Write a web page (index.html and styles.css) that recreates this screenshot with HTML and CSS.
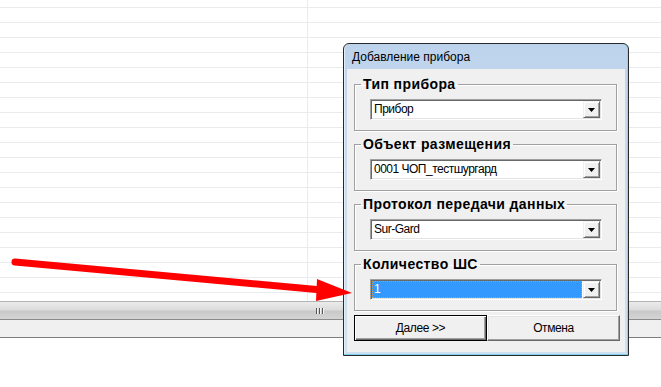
FILE: index.html
```html
<!DOCTYPE html>
<html lang="ru">
<head>
  <meta charset="UTF-8">
  <meta name="viewport" content="width=device-width, initial-scale=1.0">
  <title>Добавление прибора</title>
  <link rel="stylesheet" href="styles.css">
</head>
<body>
  <div class="sheet"></div>
  <div class="hscroll"><span class="grip"><i></i><i></i><i></i></span></div>
  <div class="status"></div>

  <div class="dialog">
    <div class="caption">Добавление прибора</div>
    <div class="client">
      <fieldset class="group">
        <legend>Тип прибора</legend>
        <div class="combo">
          <span class="value">Прибор</span>
          <span class="drop"><svg width="7" height="4" viewBox="0 0 7 4"><polygon points="0,0 7,0 3.5,4" fill="#000"/></svg></span>
        </div>
      </fieldset>
      <fieldset class="group">
        <legend>Объект размещения</legend>
        <div class="combo">
          <span class="value">0001 ЧОП_тестшургард</span>
          <span class="drop"><svg width="7" height="4" viewBox="0 0 7 4"><polygon points="0,0 7,0 3.5,4" fill="#000"/></svg></span>
        </div>
      </fieldset>
      <fieldset class="group">
        <legend>Протокол передачи данных</legend>
        <div class="combo">
          <span class="value">Sur-Gard</span>
          <span class="drop"><svg width="7" height="4" viewBox="0 0 7 4"><polygon points="0,0 7,0 3.5,4" fill="#000"/></svg></span>
        </div>
      </fieldset>
      <fieldset class="group">
        <legend>Количество ШС</legend>
        <div class="combo">
          <span class="value selected">1</span>
          <span class="drop"><svg width="7" height="4" viewBox="0 0 7 4"><polygon points="0,0 7,0 3.5,4" fill="#000"/></svg></span>
        </div>
      </fieldset>
      <div class="buttons">
        <button class="btn default">Далее &gt;&gt;</button>
        <button class="btn">Отмена</button>
      </div>
    </div>
  </div>

  <svg class="arrow" width="661" height="387" viewBox="0 0 661 387">
    <line x1="15" y1="262" x2="322" y2="290" stroke="#ff0000" stroke-width="7" stroke-linecap="round"/>
    <polygon points="317,279 352,293 316,301" fill="#ff0000"/>
  </svg>
</body>
</html>
```

FILE: styles.css
```css
body {
  margin: 0;
  width: 661px;
  height: 387px;
  overflow: hidden;
  position: relative;
  background: #fff;
  font-family: "Liberation Sans", Arial, sans-serif;
}
.sheet {
  height: 301px;
  background-color: #fff;
  background-image:
    linear-gradient(to right, transparent 307px, #e9ecef 307px, #e9ecef 308px, transparent 308px),
    repeating-linear-gradient(to bottom, transparent 0, transparent 7px, #e9ecef 7px, #e9ecef 8px, transparent 8px, transparent 15px);
}
.hscroll {
  height: 17px;
  border-top: 1px solid #b4b4b4;
  background: linear-gradient(#ebebeb, #dcdcdc 45%, #c9c9c9 55%, #d4d4d4);
  display: flex;
  justify-content: center;
  align-items: center;
  padding-left: 1px;
}
.grip {
  display: flex;
  gap: 1px;
  margin-left: -22px;
}
.grip i {
  width: 1px;
  height: 6px;
  background: #555;
  border-right: 1px solid #f4f4f4;
}
.status {
  height: 17px;
  background: #f0f0f0;
  border-top: 1px solid #8a8a8a;
  border-bottom: 1px solid #7d7d7d;
}

/* окно диалога */
.dialog {
  position: absolute;
  left: 343px;
  top: 43px;
  width: 286px;
  height: 313px;
  box-sizing: border-box;
  border: 1px solid #2a2a2a;
  border-radius: 6px 6px 0 0;
  background: linear-gradient(#bdd3ec, #c6daef 30%, #cfe0f2);
  padding: 0 3px 3px 3px;
  box-shadow: inset 0 -1px 0 #7fd0ec, inset 1px 0 0 #e4eef8, inset -1px 0 0 #8fd4ee;
}
.caption {
  height: 25px;
  line-height: 26px;
  padding-left: 5px;
  font-size: 12px;
  color: #000;
}
.client {
  height: 283px;
  box-sizing: border-box;
  background: #f0f0f0;
  padding: 8px 8px 0 7px;
  display: flex;
  flex-direction: column;
  gap: 6px;
}
.group {
  margin: 0;
  padding: 7px 0 10px 0;
  border: 1px solid #a0a0a0;
  box-shadow: inset 1px 1px 0 #fff, 1px 1px 0 #fff;
}
.group legend {
  margin-left: 6px;
  padding: 0 2px;
  font-size: 14px;
  font-weight: bold;
  line-height: 15px;
  letter-spacing: 0.4px;
  color: #000;
}
.combo {
  height: 21px;
  margin: 0 14px 0 15px;
  box-sizing: border-box;
  border-top: 1px solid #a0a0a0;
  border-left: 1px solid #a0a0a0;
  border-bottom: 1px solid #fff;
  border-right: 1px solid #fff;
  box-shadow: inset 1px 1px 0 #696969, inset -1px -1px 0 #e3e3e3;
  background: #fff;
  padding: 1px;
  display: flex;
}
.value {
  flex: 1;
  font-size: 12px;
  letter-spacing: -0.5px;
  line-height: 17px;
  padding-left: 2px;
  color: #000;
  white-space: nowrap;
}
.value.selected {
  background: #3399ff;
  color: #fff;
  border: 1px dotted #d89a3a;
  line-height: 15px;
  padding-left: 1px;
  margin-right: 1px;
}
.drop {
  width: 17px;
  height: 17px;
  box-sizing: border-box;
  background: #f0f0f0;
  border-top: 1px solid #f0f0f0;
  border-left: 1px solid #f0f0f0;
  border-right: 1px solid #696969;
  border-bottom: 1px solid #696969;
  box-shadow: inset 1px 1px 0 #fff, inset -1px -1px 0 #a0a0a0;
  display: flex;
  align-items: center;
  justify-content: center;
}
.buttons {
  display: flex;
  margin-top: -2px;
  width: 266px;
}
.btn {
  width: 133px;
  height: 26px;
  box-sizing: border-box;
  font-family: "Liberation Sans", Arial, sans-serif;
  font-size: 12px;
  letter-spacing: -0.4px;
  color: #000;
  background: #f0f0f0;
  border-top: 1px solid #fff;
  border-left: 1px solid #fff;
  border-right: 1px solid #696969;
  border-bottom: 1px solid #696969;
  box-shadow: inset -1px -1px 0 #a0a0a0, inset 1px 1px 0 #e3e3e3;
  padding: 0;
}
.btn.default {
  border: 1px solid #000;
  box-shadow: inset 1px 1px 0 #fff, inset -1px -1px 0 #696969, inset -2px -2px 0 #a0a0a0;
}
.arrow {
  position: absolute;
  left: 0;
  top: 0;
  pointer-events: none;
}
```
